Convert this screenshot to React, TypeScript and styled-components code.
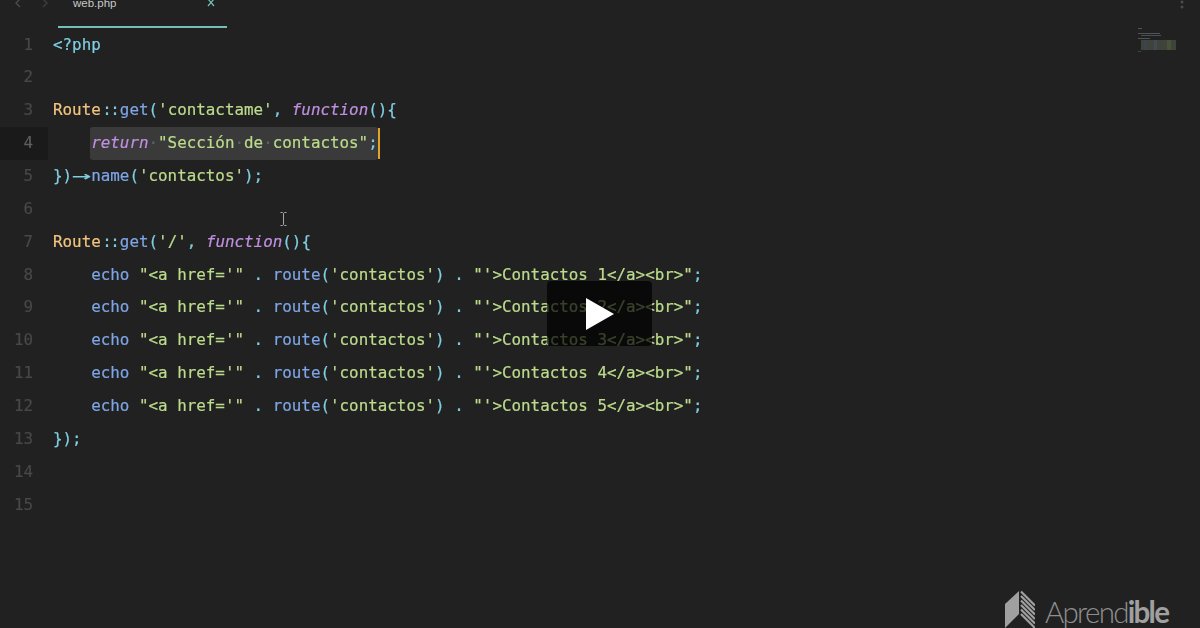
import React from 'react';
import styled, { createGlobalStyle } from 'styled-components';

const Global = createGlobalStyle`
  html, body { margin: 0; padding: 0; background: #212121; overflow: hidden; }
`;

const Page = styled.div`
  position: relative;
  width: 1200px;
  height: 628px;
  overflow: hidden;
  background: #212121;
`;

const TabBar = styled.div`
  display: flex;
  align-items: flex-start;
  height: 28.6px;
  box-sizing: border-box;
  padding-left: 14px;
`;

const NavButtons = styled.div`
  display: flex;
  gap: 16px;
  width: 44px;
`;

const Tab = styled.div`
  display: flex;
  justify-content: space-between;
  align-items: flex-start;
  width: 169px;
  height: 28px;
  box-sizing: border-box;
  padding: 0 11px 0 15px;
  border-bottom: 2px solid #74c0b8;
  font: 500 11.5px/7px "Liberation Sans", Arial, sans-serif;
  color: #c8c8c8;
`;

const Editor = styled.div`
  display: flex;
  flex-direction: column;
  font: 15.87px/32.86px "DejaVu Sans Mono", "Liberation Mono", monospace;
  -webkit-text-stroke: 0.2px currentColor;
  filter: blur(0.35px);
`;

const Row = styled.div`
  display: flex;
  height: 32.86px;
`;

const LineNo = styled.div<{ $active?: boolean }>`
  width: 48px;
  flex: none;
  box-sizing: border-box;
  padding-right: 15px;
  text-align: right;
  color: ${(p) => (p.$active ? '#5e5e5e' : '#484848')};
  background: ${(p) => (p.$active ? '#1a1a1a' : 'transparent')};
`;

const Code = styled.div`
  padding-left: 5px;
  white-space: pre;
  position: relative;
`;

const Tok = styled.span<{ $c: string; $i?: boolean }>`
  color: ${(p) => p.$c};
  font-style: ${(p) => (p.$i ? 'italic' : 'normal')};
`;

const Scope = styled.span`
  display: inline-block;
  width: 2ch;
  text-align: center;
  letter-spacing: -1.5px;
  color: #7fcfe2;
`;

const Arrow = styled.span`
  display: inline-block;
  width: 2ch;
  text-align: center;
  color: #7fcfe2;
  transform: scaleX(2);
`;

const Selection = styled.span`
  position: relative;
  display: inline-block;
  height: 33px;
  background: #3a3a3a;
  border-radius: 3px;
  margin-left: -1px;
  padding-left: 1px;
`;

const Caret = styled.span`
  position: absolute;
  right: -2px;
  top: 1px;
  bottom: 1px;
  width: 2px;
  background: #e0a526;
`;

const PlayOverlay = styled.div`
  position: absolute;
  left: 547px;
  top: 281px;
  width: 105px;
  height: 65px;
  border-radius: 4px;
  background: rgba(0, 0, 0, 0.7);
  display: flex;
  align-items: center;
  justify-content: center;
`;

const Brand = styled.div`
  position: absolute;
  left: 1005px;
  top: 590px;
  display: flex;
  align-items: flex-start;
  gap: 10px;
`;

const Wordmark = styled.div`
  font: 300 29.5px/38px Lato, "Open Sans", sans-serif;
  letter-spacing: -1.7px;
  margin-top: 3px;
  color: #8f8f8f;
`;

const Bold = styled.span`
  font-weight: 700;
  color: #a0a0a0;
`;

const Minimap = styled.svg`
  position: absolute;
  left: 1137px;
  top: 26px;
  filter: blur(0.5px);
`;

const Kebab = styled.svg`
  position: absolute;
  left: 1179px;
  top: 0;
`;

const IBeam = styled.svg`
  position: absolute;
  left: 279px;
  top: 211px;
`;

const C = {
  cyan: '#7fcfe2',
  blue: '#7ea5e6',
  green: '#bcdc8c',
  purple: '#c08fe0',
  orange: '#f3c680',
  dim: '#5c6066',
};

const EchoLine = ({ n }: { n: string }) => (
  <>
    {'    '}
    <Tok $c={C.blue}>echo</Tok> <Tok $c={C.green}>"{'<a href=\'"'}</Tok> <Tok $c={C.cyan}>.</Tok>{' '}
    <Tok $c={C.blue}>route</Tok>
    <Tok $c={C.cyan}>(</Tok>
    <Tok $c={C.green}>'contactos'</Tok>
    <Tok $c={C.cyan}>)</Tok> <Tok $c={C.cyan}>.</Tok> <Tok $c={C.green}>{`"'>Contactos ${n}</a><br>"`}</Tok>
    <Tok $c={C.cyan}>;</Tok>
  </>
);

const RouteHead = ({ path }: { path: string }) => (
  <>
    <Tok $c={C.orange}>Route</Tok>
    <Scope>::</Scope>
    <Tok $c={C.blue}>get</Tok>
    <Tok $c={C.cyan}>(</Tok>
    <Tok $c={C.green}>'{path}'</Tok>
    <Tok $c={C.cyan}>,</Tok> <Tok $c={C.purple} $i>function</Tok>
    <Tok $c={C.cyan}>(){'{'}</Tok>
  </>
);

const lines: React.ReactNode[] = [
  <Tok $c={C.cyan}>{'<?php'}</Tok>,
  null,
  <RouteHead path="contactame" />,
  <>
    {'    '}
    <Selection>
      <Tok $c={C.purple} $i>return</Tok>
      <Tok $c={C.dim}>·</Tok>
      <Tok $c={C.green}>"Sección</Tok>
      <Tok $c={C.dim}>·</Tok>
      <Tok $c={C.green}>de</Tok>
      <Tok $c={C.dim}>·</Tok>
      <Tok $c={C.green}>contactos"</Tok>
      <Tok $c={C.cyan}>;</Tok>
      <Caret />
    </Selection>
  </>,
  <>
    <Tok $c={C.cyan}>{'})'}</Tok>
    <Arrow>→</Arrow>
    <Tok $c={C.blue}>name</Tok>
    <Tok $c={C.cyan}>(</Tok>
    <Tok $c={C.green}>'contactos'</Tok>
    <Tok $c={C.cyan}>);</Tok>
  </>,
  null,
  <RouteHead path="/" />,
  <EchoLine n="1" />,
  <EchoLine n="2" />,
  <EchoLine n="3" />,
  <EchoLine n="4" />,
  <EchoLine n="5" />,
  <Tok $c={C.cyan}>{'});'}</Tok>,
  null,
  null,
];

const minimapRows = [
  { x: 1, y: 2, w: 4, c: '#46565c' },
  { x: 1, y: 7, w: 22, c: '#4c5654' },
  { x: 4, y: 9, w: 20, c: '#4a4c58' },
  { x: 1, y: 12, w: 12, c: '#4c5654' },
];

export default function App() {
  return (
    <Page>
      <Global />
      <TabBar>
        <NavButtons>
          <svg width="10" height="8" viewBox="0 0 10 8" fill="none" stroke="#4a4a4a" strokeWidth="1.4"><path d="M6 -1 L2 3 L6 7" /></svg>
          <svg width="10" height="8" viewBox="0 0 10 8" fill="none" stroke="#3e3e3e" strokeWidth="1.4"><path d="M3 -1 L7 3 L3 7" /></svg>
        </NavButtons>
        <Tab>
          <span>web.php</span>
          <svg width="10" height="8" viewBox="0 0 10 8" fill="none" stroke="#74c0b8" strokeWidth="1.2"><path d="M2 -1 L8 6 M8 -1 L2 6" /></svg>
        </Tab>
      </TabBar>
      <Editor>
        {lines.map((line, i) => (
          <Row key={i}>
            <LineNo $active={i === 3}>{i + 1}</LineNo>
            <Code>{line}</Code>
          </Row>
        ))}
      </Editor>
      <IBeam width="9" height="16" viewBox="0 0 9 16" fill="none" stroke="#a8a8a8" strokeWidth="1">
        <path d="M1.5 1.5 H3.5 L4.5 2.5 L5.5 1.5 H7.5 M4.5 2.5 V13.5 M1.5 14.5 H3.5 L4.5 13.5 L5.5 14.5 H7.5" />
      </IBeam>
      <Kebab width="6" height="14" viewBox="0 0 6 14" fill="#4c4c4c">
        <circle cx="3" cy="2" r="1.5" />
        <circle cx="3" cy="7" r="1.5" />
      </Kebab>
      <Minimap width="40" height="28" viewBox="0 0 40 28">
        {minimapRows.map((r, i) => (
          <rect key={i} x={r.x} y={r.y} width={r.w} height="1" fill={r.c} />
        ))}
        <rect x="4" y="14" width="35" height="10" fill="#3e4439" />
        <rect x="7" y="14" width="3" height="10" fill="#3c4454" />
        <rect x="17" y="14" width="3" height="10" fill="#414a56" />
        <rect x="30" y="14" width="4" height="10" fill="#4a5239" />
        <rect x="1" y="25" width="3" height="1" fill="#3c4548" />
      </Minimap>
      <PlayOverlay>
        <svg width="28" height="32" viewBox="0 0 28 32" fill="#ffffff"><path d="M0 0 L28 16 L0 32 Z" /></svg>
      </PlayOverlay>
      <Brand>
        <svg width="30" height="38" viewBox="0 0 30 38">
          <path d="M14 1 L14 24 L0 38 L0 14 Z" fill="#a0a0a0" />
          <g stroke="#a0a0a0" strokeWidth="2.2" fill="none">
            <path d="M16 1.5 L30 15.5" />
            <path d="M16 6 L30 20" />
            <path d="M16 10.5 L30 24.5" />
            <path d="M16 15 L30 29" />
            <path d="M16 19.5 L30 33.5" />
            <path d="M16 24 L30 38" />
          </g>
        </svg>
        <Wordmark>
          Aprend<Bold>ible</Bold>
        </Wordmark>
      </Brand>
    </Page>
  );
}
